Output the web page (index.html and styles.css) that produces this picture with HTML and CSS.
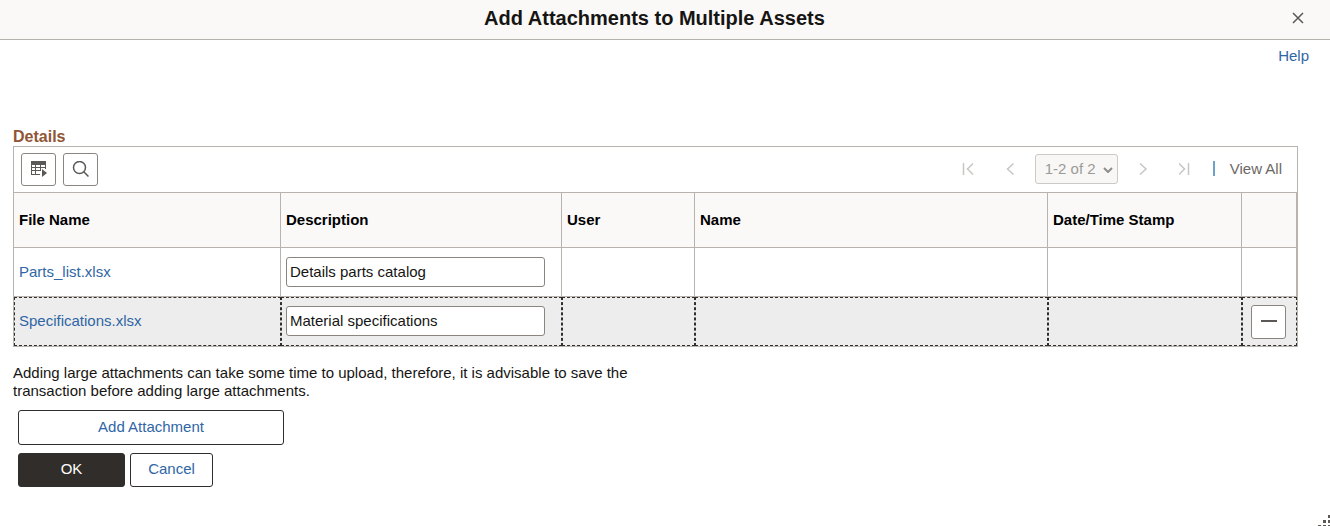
FILE: index.html
```html
<!DOCTYPE html>
<html lang="en">
<head>
  <meta charset="UTF-8">
  <title>Add Attachments to Multiple Assets</title>
  <link rel="stylesheet" href="styles.css">
</head>
<body>

  <div class="modal-header">
    <h1>Add Attachments to Multiple Assets</h1>
    <button class="close-btn" aria-label="Close">
      <svg width="12" height="12" viewBox="0 0 12 12"><path d="M1 1 L11 11 M11 1 L1 11" /></svg>
    </button>
  </div>

  <div class="help"><a href="#">Help</a></div>

  <!-- Details grid -->
  <div class="content">
    <h2>Details</h2>
    <div class="grid">
      <div class="toolbar">
        <button class="icon-btn" aria-label="Grid actions">
          <svg width="18" height="18" viewBox="0 0 18 18">
            <path class="fill" d="M1 0h15v4H1z M12 8l5 4-5 4z" />
            <path class="thin" d="M1.500 4v10 M5.500 4v10 M10.500 4v5 M15.500 4v4 M1 6.500h15 M1 9.500h10 M1 13.500h9" />
          </svg>
        </button>
        <button class="icon-btn" aria-label="Find">
          <svg width="18" height="18" viewBox="0 0 18 18">
            <circle cx="7.500" cy="6.500" r="6" />
            <path d="M11.700 10.700 L16.500 15.500" />
          </svg>
        </button>

        <div class="pager">
          <button class="nav-btn" aria-label="First" disabled>
            <svg width="12" height="14" viewBox="0 0 12 14"><path d="M1.500 1v12 M11 1.500L5.500 7l5.500 5.500" /></svg>
          </button>
          <button class="nav-btn" aria-label="Previous" disabled>
            <svg width="12" height="14" viewBox="0 0 12 14"><path d="M9.500 1.500L3.500 7l6 5.500" /></svg>
          </button>
          <div class="range">
            <select aria-label="Rows" disabled>
              <option>1-2 of 2</option>
            </select>
            <svg class="arrow" width="10" height="6" viewBox="0 0 10 6"><path d="M1 1l4 4 4-4" /></svg>
          </div>
          <button class="nav-btn" aria-label="Next" disabled>
            <svg width="12" height="14" viewBox="0 0 12 14"><path d="M3 1.500L9 7l-6 5.500" /></svg>
          </button>
          <button class="nav-btn" aria-label="Last" disabled>
            <svg width="12" height="14" viewBox="0 0 12 14"><path d="M0 1.500L5.500 7 0 12.500 M9.500 1v12" /></svg>
          </button>
          <span class="divider"></span>
          <button class="view-all">View All</button>
        </div>
      </div>

      <table>
        <thead>
          <tr>
            <th class="col-file">File Name</th>
            <th class="col-desc">Description</th>
            <th class="col-user">User</th>
            <th>Name</th>
            <th class="col-date">Date/Time Stamp</th>
            <th class="col-action"></th>
          </tr>
        </thead>
        <tbody>
          <tr>
            <td><a href="#">Parts_list.xlsx</a></td>
            <td><input type="text" aria-label="Description" value="Details parts catalog"></td>
            <td></td>
            <td></td>
            <td></td>
            <td></td>
          </tr>
          <tr class="selected">
            <td><a href="#">Specifications.xlsx</a></td>
            <td><input type="text" aria-label="Description" value="Material specifications"></td>
            <td></td>
            <td></td>
            <td></td>
            <td class="action">
              <button class="icon-btn" aria-label="Delete row">
                <svg width="18" height="18" viewBox="0 0 18 18"><path class="fill" d="M1 7h16v2H1z" /></svg>
              </button>
            </td>
          </tr>
        </tbody>
      </table>
    </div>

    <p class="note">Adding large attachments can take some time to upload, therefore, it is advisable to save the transaction before adding large attachments.</p>

    <div class="actions">
      <button class="btn btn-add">Add Attachment</button>
      <div class="btn-row">
        <button class="btn btn-ok">OK</button>
        <button class="btn btn-cancel">Cancel</button>
      </div>
    </div>
  </div>

  <svg class="grip" width="12" height="11" viewBox="0 0 12 11">
    <path d="M10 0h3v3h-3z M5 5h3v3H5z M10 5h3v3h-3z M0 10h3v1H0z M5 10h3v1H5z M10 10h3v1h-3z" />
  </svg>

</body>
</html>
```

FILE: styles.css
```css
* {
  box-sizing: border-box;
}
body {
  margin: 0;
  font-family: "Liberation Sans", Arial, sans-serif;
  font-size: 15px;
  line-height: 18px;
  color: #161513;
  background: #fff;
}
button, input, select {
  font: inherit;
  margin: 0;
}
button {
  padding: 0;
  cursor: pointer;
}
svg {
  display: block;
  fill: none;
  stroke: #5b5855;
  stroke-width: 1.5;
}
svg .fill {
  fill: #5b5855;
  stroke: none;
}
svg .thin {
  stroke-width: 1;
}
a {
  color: #2f66a5;
  text-decoration: none;
}

.modal-header {
  display: grid;
  grid-template-columns: 36px 1fr 50px;
  align-items: center;
  height: 40px;
  padding-right: 7px;
  padding-bottom: 3px;
  background: #faf9f8;
  border-bottom: 1px solid #b5b2ae;
}
.modal-header h1 {
  grid-column: 2;
  margin: 0;
  text-align: center;
  font-size: 20px;
  line-height: 24px;
}
.close-btn {
  justify-self: center;
  padding: 4px;
  border: none;
  background: none;
}
.help {
  padding: 7px 21px 0 0;
  text-align: right;
}

.content {
  padding: 62px 32px 0 13px;
}
h2 {
  margin: 0;
  font-size: 16px;
  line-height: 19px;
  color: #8f5536;
}
.grid {
  border: 1px solid #b8b3ae;
}
.toolbar {
  display: flex;
  align-items: center;
  gap: 7px;
  height: 46px;
  padding: 0 7px;
  border-bottom: 1px solid #b8b3ae;
}
.icon-btn {
  display: flex;
  align-items: center;
  justify-content: center;
  width: 35px;
  height: 33px;
  background: #fff;
  border: 1px solid #8b8580;
  border-radius: 3px;
}

.pager {
  display: flex;
  align-items: center;
  margin-left: auto;
  padding-right: 8px;
  padding-bottom: 2px;
}
.nav-btn {
  display: flex;
  align-items: center;
  justify-content: center;
  width: 42px;
  height: 30px;
  border: none;
  background: none;
}
.nav-btn svg {
  stroke: #c8c6c4;
}
.range {
  position: relative;
  margin: 0 4px;
}
.range select {
  display: block;
  appearance: none;
  width: 83px;
  height: 30px;
  padding: 0 9px;
  color: #9c9a98;
  background: #f8f7f6;
  border: 1px solid #ccc9c6;
  border-radius: 3px;
  opacity: 1;
}
.arrow {
  position: absolute;
  right: 5px;
  top: 13px;
  stroke: #8f8d8b;
  stroke-width: 2;
}
.divider {
  width: 2px;
  height: 15px;
  margin: 0 15px 0 7px;
  background: #6ba3c8;
}
.view-all {
  color: #6b6865;
  border: none;
  background: none;
}

table {
  width: 100%;
  table-layout: fixed;
  border-collapse: separate;
  border-spacing: 0;
}
th, td {
  padding: 0 5px;
  text-align: left;
  vertical-align: middle;
  border-right: 1px solid #b8b3ae;
  border-bottom: 1px solid #b8b3ae;
}
th {
  height: 55px;
  color: #000;
  background: #faf9f8;
}
td {
  height: 49px;
}
.col-file { width: 267px; }
.col-desc { width: 281px; }
.col-user { width: 133px; }
.col-date { width: 194px; }
.col-action { width: 55px; }
.selected td {
  padding: 0 4px 2px;
  background: #ededed;
  border: 1px dashed #312d2a;
}
.selected .action {
  padding: 0 8px;
}
.action .icon-btn {
  height: 34px;
}
td input {
  display: block;
  width: 259px;
  height: 30px;
  padding: 0 3px 1px;
  color: #161513;
  background: #fff;
  border: 1px solid #8b8580;
  border-radius: 3px;
}

.note {
  max-width: 620px;
  margin: 17px 0 10px;
}
.actions {
  padding-left: 5px;
}
.btn {
  height: 34px;
  padding-bottom: 2px;
  color: #2f66a5;
  background: #fff;
  border: 1px solid #312d2a;
  border-radius: 3px;
}
.btn-add {
  display: block;
  width: 266px;
  height: 35px;
}
.btn-row {
  display: flex;
  gap: 5px;
  margin-top: 8px;
}
.btn-ok {
  width: 107px;
  color: #fff;
  background: #312d2a;
}
.btn-cancel {
  width: 83px;
}

.grip {
  position: fixed;
  right: 0;
  bottom: 0;
}
.grip path {
  fill: #5b5855;
  stroke: none;
}
```
